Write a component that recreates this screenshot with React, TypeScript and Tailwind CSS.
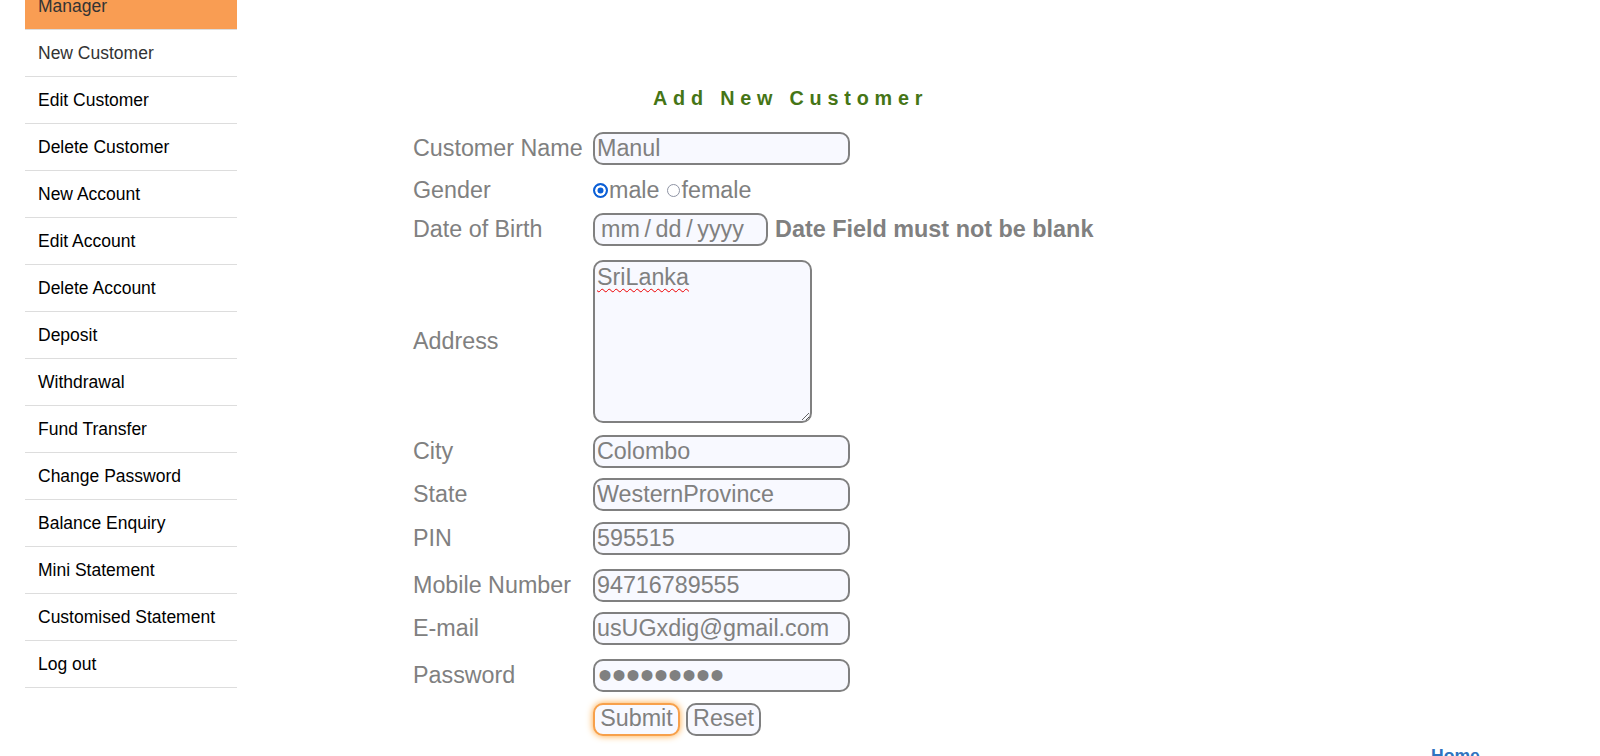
import React, { useState } from "react";

const menu = [
  "New Customer",
  "Edit Customer",
  "Delete Customer",
  "New Account",
  "Edit Account",
  "Delete Account",
  "Deposit",
  "Withdrawal",
  "Fund Transfer",
  "Change Password",
  "Balance Enquiry",
  "Mini Statement",
  "Customised Statement",
  "Log out",
];

const font = { fontFamily: '"Liberation Sans", Arial, sans-serif' };

const inputCls =
  "h-[33px] border-2 border-[#808080] rounded-[10px] bg-[#f8f9ff] px-[2px] text-[23.3px] leading-none text-[#808080] outline-none";

export default function App() {
  const [form, setForm] = useState({
    name: "Manul",
    gender: "male",
    dob: "",
    addr: "SriLanka",
    city: "Colombo",
    state: "WesternProvince",
    pin: "595515",
    mobile: "94716789555",
    email: "usUGxdig@gmail.com",
    password: "123456789",
  });

  const change = (e: React.ChangeEvent<HTMLInputElement | HTMLTextAreaElement>) => {
    setForm((prev) => ({ ...prev, [e.target.name]: e.target.value }));
  };

  return (
    <div className="flex min-h-screen bg-white" style={font}>
      {/* side menu */}
      <ul className="ml-[25px] w-[212px] shrink-0 -mt-[17px]">
        <li className="h-[47px] bg-[#f99d53] border-b border-[#dddddd] flex items-center pl-[13px] text-[17.5px] text-[#333]">
          Manager
        </li>
        {menu.map((item, i) => (
          <li
            key={item}
            className={`h-[47px] border-b border-[#dddddd] flex items-center pl-[13px] text-[17.5px] ${
              i === 0 ? "text-[#333]" : "text-black"
            }`}
          >
            <a href="#">{item}</a>
          </li>
        ))}
      </ul>

      <div className="flex-1 flex flex-col">
        <form className="flex flex-col pl-[176px]" onSubmit={(e) => e.preventDefault()}>
          <p className="mt-[87px] ml-[240px] text-[19.8px] leading-[22px] font-bold tracking-[5.8px] text-[#457516]">
            Add New Customer
          </p>

          <div className="mt-[23px] flex items-center h-[33px]">
            <label className="w-[180px] text-[23.3px] text-[#808080]">Customer Name</label>
            <input name="name" value={form.name} onChange={change} className={`${inputCls} w-[257px]`} />
          </div>

          <div className="mt-[9px] flex items-center h-[33px]">
            <label className="w-[180px] text-[23.3px] text-[#808080]">Gender</label>
            <div className="flex items-center text-[23.3px] text-[#808080]">
              <input
                type="radio"
                name="gender"
                value="male"
                checked={form.gender === "male"}
                onChange={change}
                className="appearance-none w-[15px] h-[15px] m-0 mr-[1px] rounded-full border-2 border-[#0b5fd6] bg-[#0b5fd6] shadow-[inset_0_0_0_2.5px_white]"
              />
              <span>male</span>
              <input
                type="radio"
                name="gender"
                value="female"
                checked={form.gender === "female"}
                onChange={change}
                className="appearance-none w-[13px] h-[13px] m-0 ml-[7px] mr-[2px] rounded-full border border-[#8e93a3] bg-white"
              />
              <span>female</span>
            </div>
          </div>

          <div className="mt-[6px] flex items-center h-[33px]">
            <label className="w-[180px] text-[23.3px] text-[#808080]">Date of Birth</label>
            <input
              name="dob"
              value={form.dob}
              onChange={change}
              placeholder={"mm\u2009/\u2009dd\u2009/\u2009yyyy"}
              className={`${inputCls} w-[175px] px-[6px] placeholder:text-[#808080]`}
            />
            <span className="ml-[7px] text-[23.4px] font-bold text-[#808080]">Date Field must not be blank</span>
          </div>

          <div className="mt-[14px] flex items-center h-[163px]">
            <label className="w-[180px] text-[23.3px] text-[#808080]">Address</label>
            <div className="relative">
              <textarea
                name="addr"
                value={form.addr}
                onChange={change}
                spellCheck={false}
                className="block w-[219px] h-[163px] border-2 border-[#808080] rounded-[10px] bg-[#f8f9ff] px-[2px] pt-[2px] text-[23.3px] leading-[27px] text-[#808080] outline-none"
              />
              <span className="absolute left-[4px] top-[4px] text-[23.3px] leading-[27px] text-transparent underline decoration-wavy decoration-[#e00] decoration-1 underline-offset-[3px] pointer-events-none">
                SriLanka
              </span>
            </div>
          </div>

          <div className="mt-[12px] flex items-center h-[33px]">
            <label className="w-[180px] text-[23.3px] text-[#808080]">City</label>
            <input name="city" value={form.city} onChange={change} className={`${inputCls} w-[257px]`} />
          </div>

          <div className="mt-[10px] flex items-center h-[33px]">
            <label className="w-[180px] text-[23.3px] text-[#808080]">State</label>
            <input name="state" value={form.state} onChange={change} className={`${inputCls} w-[257px]`} />
          </div>

          <div className="mt-[10.5px] flex items-center h-[33px]">
            <label className="w-[180px] text-[23.3px] text-[#808080]">PIN</label>
            <input name="pin" value={form.pin} onChange={change} className={`${inputCls} w-[257px]`} />
          </div>

          <div className="mt-[14px] flex items-center h-[33px]">
            <label className="w-[180px] text-[23.3px] text-[#808080]">Mobile Number</label>
            <input name="mobile" value={form.mobile} onChange={change} className={`${inputCls} w-[257px]`} />
          </div>

          <div className="mt-[10px] flex items-center h-[33px]">
            <label className="w-[180px] text-[23.3px] text-[#808080]">E-mail</label>
            <input name="email" value={form.email} onChange={change} className={`${inputCls} w-[257px]`} />
          </div>

          <div className="mt-[14px] flex items-center h-[33px]">
            <label className="w-[180px] text-[23.3px] text-[#808080]">Password</label>
            <input
              type="password"
              name="password"
              value={form.password}
              onChange={change}
              className="h-[33px] w-[257px] border-2 border-[#808080] rounded-[10px] bg-[#f8f9ff] px-[3px] text-[40px] leading-none text-[#808080] outline-none"
            />
          </div>

          <div className="mt-[11px] flex items-center h-[33px] pl-[180px] gap-[6px]">
            <button
              type="submit"
              className="h-[33px] w-[87px] p-0 border-2 border-[#f7a04b] rounded-[10px] bg-[#f8f9ff] text-[23.3px] leading-[25px] pb-[2px] text-[#808080] shadow-[0_0_7px_#ffa53a]"
            >
              Submit
            </button>
            <button
              type="reset"
              className="h-[33px] w-[75px] p-0 border-2 border-[#808080] rounded-[10px] bg-[#f8f9ff] text-[23.3px] leading-[25px] pb-[2px] text-[#808080]"
            >
              Reset
            </button>
          </div>
        </form>

        <div className="mt-[9px] pl-[1194px] pb-[20px]">
          <a href="#" className="text-[17.6px] leading-[20px] font-bold text-[#2f74c0]">
            Home
          </a>
        </div>
      </div>
    </div>
  );
}
